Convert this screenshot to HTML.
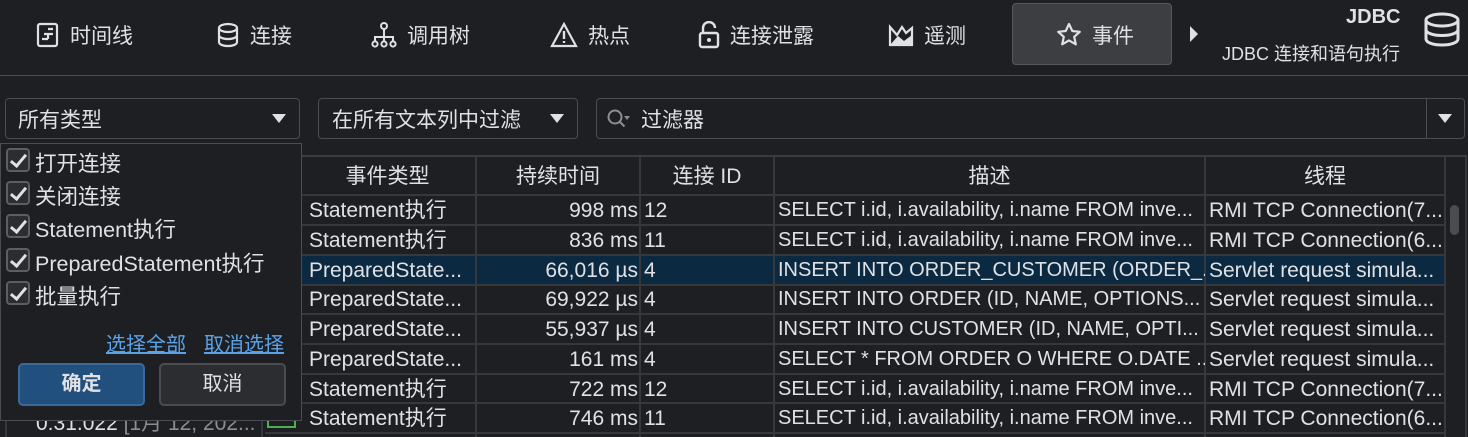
<!DOCTYPE html>
<html><head><meta charset="utf-8"><style>
*{margin:0;padding:0;box-sizing:border-box}
body{width:1468px;height:437px;background:#1e1f22;color:#dfe1e5;font-family:"Liberation Sans","Noto Sans CJK SC",sans-serif;overflow:hidden;position:relative}
.a{position:absolute;white-space:nowrap}
.tab{position:absolute;top:0;height:70px;display:flex;align-items:center;font-size:21px;color:#dfe1e5}
.tab svg{margin-right:10px}
.box{position:absolute;border:1px solid #4a4c50;border-radius:4px;background:#1e1f22;font-size:21px;display:flex;align-items:center}
.tri{position:absolute;width:0;height:0;border-left:7px solid transparent;border-right:7px solid transparent;border-top:9px solid #dfe1e5}
.cell{position:absolute;font-size:21px;overflow:hidden;white-space:nowrap;line-height:31px}
.d{font-size:20px}
.vl{position:absolute;width:2px;background:#36383c}
.hl{position:absolute;height:2px;background:#36383c}
.cb{position:absolute;left:6px;width:24px;height:24px;border:2px solid #5c5e62;border-radius:4px;background:#2b2d30}
.cb:after{content:"";position:absolute;left:6px;top:1px;width:6px;height:13px;border:solid #dfe1e5;border-width:0 3px 3px 0;transform:rotate(40deg)}
.ci{position:absolute;left:35px;font-size:21.5px}
</style></head><body>

<div class="tab" style="left:36px"><svg width="24" height="26" viewBox="0 0 24 26"><rect x="2" y="2" width="19" height="22" rx="2" fill="none" stroke="#dfe1e5" stroke-width="2.2"/><path d="M12 7h5M8 12h9M8 12v0M12 12v5M6 17h6" stroke="#dfe1e5" stroke-width="2.2" fill="none"/></svg>时间线</div>
<div class="tab" style="left:216px"><svg width="24" height="26" viewBox="0 0 24 26"><ellipse cx="12" cy="6" rx="9" ry="4" fill="none" stroke="#dfe1e5" stroke-width="2.2"/><path d="M3 6v14c0 2.5 4 4 9 4s9-1.5 9-4V6M3 13c0 2.5 4 4 9 4s9-1.5 9-4" fill="none" stroke="#dfe1e5" stroke-width="2.2"/></svg>连接</div>
<div class="tab" style="left:371px"><svg width="26" height="26" viewBox="0 0 26 26"><circle cx="13" cy="4" r="3" fill="none" stroke="#dfe1e5" stroke-width="2"/><path d="M13 7v8M4 19v-4h18v4M13 15v4" stroke="#dfe1e5" stroke-width="2" fill="none"/><circle cx="4" cy="22" r="2.6" fill="none" stroke="#dfe1e5" stroke-width="2"/><circle cx="13" cy="22" r="2.6" fill="none" stroke="#dfe1e5" stroke-width="2"/><circle cx="22" cy="22" r="2.6" fill="none" stroke="#dfe1e5" stroke-width="2"/></svg>调用树</div>
<div class="tab" style="left:550px"><svg width="28" height="26" viewBox="0 0 28 26"><path d="M14 2L26 24H2Z" fill="none" stroke="#dfe1e5" stroke-width="2.2"/><path d="M14 9v8M14 19v2" stroke="#dfe1e5" stroke-width="2.4"/></svg>热点</div>
<div class="tab" style="left:698px"><svg width="22" height="28" viewBox="0 0 22 28"><path d="M5 12V7a6 6 0 0 1 12 0" fill="none" stroke="#dfe1e5" stroke-width="2.4"/><rect x="2" y="12" width="18" height="14" rx="2" fill="none" stroke="#dfe1e5" stroke-width="2.4"/><circle cx="11" cy="19" r="2" fill="#dfe1e5"/></svg>连接泄露</div>
<div class="tab" style="left:888px"><svg width="26" height="24" viewBox="0 0 26 24"><path d="M2 22V4l7 8 5-8 4 6 6-5v17Z" fill="none" stroke="#dfe1e5" stroke-width="2.2"/><path d="M2 22l8-9 6 5 8-6v10Z" fill="#dfe1e5"/></svg>遥测</div>
<div class="a" style="left:1012px;top:3px;width:160px;height:62px;background:#3c3e42;border:1px solid #56585c;border-radius:4px"></div>
<div class="tab" style="left:1056px"><svg width="26" height="26" viewBox="0 0 26 26"><path d="M13 2l3.3 7 7.5.8-5.6 5 1.6 7.5L13 18.4 6.2 22.3l1.6-7.5-5.6-5 7.5-.8Z" fill="none" stroke="#dfe1e5" stroke-width="2.2" stroke-linejoin="round"/></svg>事件</div>
<div class="a" style="left:1190px;top:26px;width:0;height:0;border-top:8px solid transparent;border-bottom:8px solid transparent;border-left:8px solid #dfe1e5"></div>
<div class="a" style="left:1346px;top:6px;font-size:20px;font-weight:bold">JDBC</div>
<div class="a" style="left:1222px;top:40px;font-size:18px">JDBC 连接和语句执行</div>
<svg class="a" style="left:1422px;top:12px" width="40" height="36" viewBox="0 0 40 36"><ellipse cx="20" cy="8" rx="16" ry="6" fill="none" stroke="#dfe1e5" stroke-width="3"/><path d="M4 8v19c0 3.5 7 6 16 6s16-2.5 16-6V8M4 17.5c0 3.5 7 6 16 6s16-2.5 16-6" fill="none" stroke="#dfe1e5" stroke-width="3"/></svg>
<div class="a" style="left:0;top:75px;width:1468px;height:1px;background:#4a4c50"></div>

<div class="box" style="left:5px;top:98px;width:295px;height:41px;padding-left:12px">所有类型</div>
<div class="tri" style="left:272px;top:114px"></div>
<div class="box" style="left:318px;top:98px;width:260px;height:41px;padding-left:13px">在所有文本列中过滤</div>
<div class="tri" style="left:550px;top:114px"></div>
<div class="box" style="left:596px;top:98px;width:869px;height:41px;padding-left:44px;color:#dfe1e5">过滤器</div>
<svg class="a" style="left:606px;top:108px" width="30" height="22" viewBox="0 0 30 22"><circle cx="9" cy="9" r="6.5" fill="none" stroke="#8c8e92" stroke-width="2"/><path d="M13.5 13.5l5 5" stroke="#8c8e92" stroke-width="2"/><path d="M18 8h6l-3 4z" fill="#8c8e92"/></svg>
<div class="a" style="left:1426px;top:99px;width:1px;height:39px;background:#4a4c50"></div>
<div class="tri" style="left:1438px;top:114px"></div>

<div class="a" style="left:265px;top:155px;width:1203px;height:282px;background:#1e1f22"></div>
<div class="hl" style="left:265px;top:155px;width:1200px;background:#3a3c40"></div>
<div class="hl" style="left:265px;top:194px;width:1180px"></div>
<div class="a" style="left:300px;top:255px;width:1145px;height:29px;background:#0b2940"></div>
<div class="hl" style="left:265px;top:224px;width:1180px"></div>
<div class="hl" style="left:265px;top:254px;width:1180px"></div>
<div class="hl" style="left:265px;top:284px;width:1180px"></div>
<div class="hl" style="left:265px;top:313px;width:1180px"></div>
<div class="hl" style="left:265px;top:343px;width:1180px"></div>
<div class="hl" style="left:265px;top:373px;width:1180px"></div>
<div class="hl" style="left:265px;top:402px;width:1180px"></div>
<div class="hl" style="left:265px;top:432px;width:1180px"></div>
<div class="vl" style="left:475px;top:157px;height:280px"></div>
<div class="vl" style="left:639px;top:157px;height:280px"></div>
<div class="vl" style="left:773px;top:157px;height:280px"></div>
<div class="vl" style="left:1204px;top:157px;height:280px"></div>
<div class="vl" style="left:1444px;top:157px;height:280px"></div>
<div class="a" style="left:1465px;top:155px;width:2px;height:282px;background:#36383c"></div>
<div class="a" style="left:1450px;top:205px;width:9px;height:30px;border-radius:5px;background:#4a4c50"></div>

<div class="cell" style="left:300px;top:161px;width:175px;text-align:center">事件类型</div>
<div class="cell" style="left:477px;top:161px;width:162px;text-align:center">持续时间</div>
<div class="cell" style="left:641px;top:161px;width:132px;text-align:center">连接 ID</div>
<div class="cell" style="left:775px;top:161px;width:429px;text-align:center">描述</div>
<div class="cell" style="left:1206px;top:161px;width:238px;text-align:center">线程</div>

<div class="a" style="left:0;top:195px">
<div class="cell" style="left:309px;top:0">Statement执行</div><div class="cell" style="left:477px;top:0;width:161px;text-align:right">998 ms</div><div class="cell" style="left:644px;top:0">12</div><div class="cell d" style="left:778px;top:0;width:427px">SELECT i.id, i.availability, i.name FROM inve...</div><div class="cell" style="left:1209px;top:0;width:235px">RMI TCP Connection(7...</div>
<div class="cell" style="left:309px;top:30px">Statement执行</div><div class="cell" style="left:477px;top:30px;width:161px;text-align:right">836 ms</div><div class="cell" style="left:644px;top:30px">11</div><div class="cell d" style="left:778px;top:30px;width:427px">SELECT i.id, i.availability, i.name FROM inve...</div><div class="cell" style="left:1209px;top:30px;width:235px">RMI TCP Connection(6...</div>
<div class="cell" style="left:309px;top:60px">PreparedState...</div><div class="cell" style="left:477px;top:60px;width:161px;text-align:right">66,016 µs</div><div class="cell" style="left:644px;top:60px">4</div><div class="cell d" style="left:778px;top:60px;width:427px">INSERT INTO ORDER_CUSTOMER (ORDER_...</div><div class="cell" style="left:1209px;top:60px;width:235px">Servlet request simula...</div>
<div class="cell" style="left:309px;top:89px">PreparedState...</div><div class="cell" style="left:477px;top:89px;width:161px;text-align:right">69,922 µs</div><div class="cell" style="left:644px;top:89px">4</div><div class="cell d" style="left:778px;top:89px;width:427px">INSERT INTO ORDER (ID, NAME, OPTIONS...</div><div class="cell" style="left:1209px;top:89px;width:235px">Servlet request simula...</div>
<div class="cell" style="left:309px;top:119px">PreparedState...</div><div class="cell" style="left:477px;top:119px;width:161px;text-align:right">55,937 µs</div><div class="cell" style="left:644px;top:119px">4</div><div class="cell d" style="left:778px;top:119px;width:427px">INSERT INTO CUSTOMER (ID, NAME, OPTI...</div><div class="cell" style="left:1209px;top:119px;width:235px">Servlet request simula...</div>
<div class="cell" style="left:309px;top:149px">PreparedState...</div><div class="cell" style="left:477px;top:149px;width:161px;text-align:right">161 ms</div><div class="cell" style="left:644px;top:149px">4</div><div class="cell d" style="left:778px;top:149px;width:427px">SELECT * FROM ORDER O WHERE O.DATE ...</div><div class="cell" style="left:1209px;top:149px;width:235px">Servlet request simula...</div>
<div class="cell" style="left:309px;top:179px">Statement执行</div><div class="cell" style="left:477px;top:179px;width:161px;text-align:right">722 ms</div><div class="cell" style="left:644px;top:179px">12</div><div class="cell d" style="left:778px;top:179px;width:427px">SELECT i.id, i.availability, i.name FROM inve...</div><div class="cell" style="left:1209px;top:179px;width:235px">RMI TCP Connection(7...</div>
<div class="cell" style="left:309px;top:208px">Statement执行</div><div class="cell" style="left:477px;top:208px;width:161px;text-align:right">746 ms</div><div class="cell" style="left:644px;top:208px">11</div><div class="cell d" style="left:778px;top:208px;width:427px">SELECT i.id, i.availability, i.name FROM inve...</div><div class="cell" style="left:1209px;top:208px;width:235px">RMI TCP Connection(6...</div>
</div>
<div class="a" style="left:5px;top:420px;width:258px;height:17px;border-left:2px solid #36383c;border-right:2px solid #36383c"></div>
<div class="a" style="left:36px;top:407px;font-size:21px;color:#dfe1e5">0:31.022 <span style="color:#8c8e92">[1月 12, 202...</span></div>
<div class="a" style="left:267px;top:420px;width:29px;height:8px;border:2px solid #4caf50;border-top:none"></div>

<div class="a" style="left:0;top:143px;width:302px;height:278px;background:#1e1f22;border:1px solid #4a4c50"></div>
<div class="cb" style="top:148px"></div><div class="ci a" style="top:147px">打开连接</div>
<div class="cb" style="top:181px"></div><div class="ci a" style="top:180px">关闭连接</div>
<div class="cb" style="top:214px"></div><div class="ci a" style="top:213px">Statement执行</div>
<div class="cb" style="top:248px"></div><div class="ci a" style="top:247px">PreparedStatement执行</div>
<div class="cb" style="top:281px"></div><div class="ci a" style="top:280px">批量执行</div>
<div class="a" style="left:106px;top:328px;font-size:20px;color:#5ba3e8;text-decoration:underline">选择全部</div>
<div class="a" style="left:204px;top:328px;font-size:20px;color:#5ba3e8;text-decoration:underline">取消选择</div>
<div class="a" style="left:18px;top:363px;width:127px;height:43px;background:#21507e;border:2px solid #3a6a9a;border-radius:5px;font-size:20px;font-weight:bold;text-align:center;line-height:39px">确定</div>
<div class="a" style="left:159px;top:363px;width:127px;height:43px;background:#2b2d30;border:2px solid #4a4c50;border-radius:5px;font-size:20px;text-align:center;line-height:39px">取消</div>
</body></html>
